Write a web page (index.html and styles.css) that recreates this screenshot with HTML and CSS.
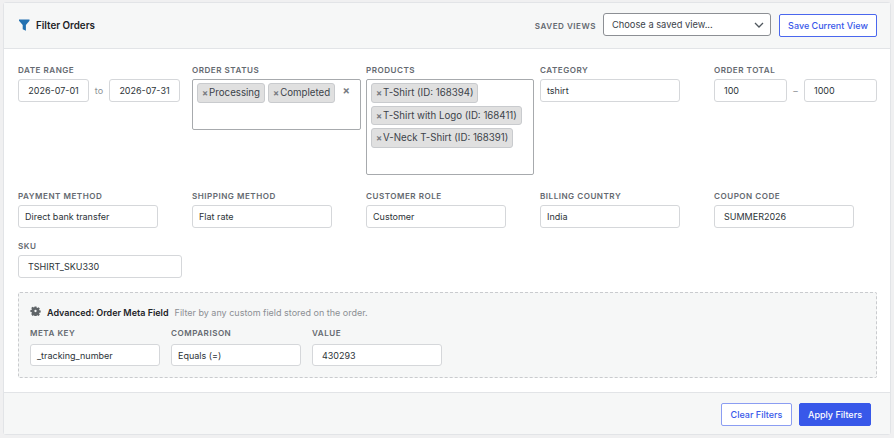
FILE: index.html
```html
<!DOCTYPE html>
<html lang="en">
<head>
  <meta charset="UTF-8">
  <title>Filter Orders</title>
  <link rel="stylesheet" href="styles.css">
</head>
<body>

  <div class="panel">

    <div class="panel-head">
      <div class="panel-title">
        <svg class="filter-icon" width="11" height="12" viewBox="0 0 11 12"><path d="M0 0.5h10.500v1.200L6.900 6v5.800L3.700 10.200V6L0 1.700z" fill="#2271b1"/></svg>
        <strong>Filter Orders</strong>
      </div>
      <div class="saved-views">
        <span class="saved-label">SAVED VIEWS</span>
        <div class="saved-select">
          <span>Choose a saved view...</span>
          <svg width="10" height="6" viewBox="0 0 10 6"><path d="M1 1l4 4 4-4" fill="none" stroke="#50575e" stroke-width="1.300"/></svg>
        </div>
        <button class="btn btn-outline btn-save">Save Current View</button>
      </div>
    </div>

    <div class="panel-body">

      <div class="filter-grid row-one">
        <div class="field">
          <label>DATE RANGE</label>
          <div class="pair">
            <div class="input w-date center">2026-07-01</div>
            <span class="sep sep-to">to</span>
            <div class="input w-date center">2026-07-31</div>
          </div>
        </div>
        <div class="field">
          <label>ORDER STATUS</label>
          <div class="multi status-box">
            <span class="tag"><i>×</i>Processing</span>
            <span class="tag"><i>×</i>Completed</span>
            <span class="clear-x">×</span>
          </div>
        </div>
        <div class="field">
          <label>PRODUCTS</label>
          <div class="multi products-box">
            <span class="tag"><i>×</i>T-Shirt (ID: 168394)</span>
            <span class="tag"><i>×</i>T-Shirt with Logo (ID: 168411)</span>
            <span class="tag"><i>×</i>V-Neck T-Shirt (ID: 168391)</span>
          </div>
        </div>
        <div class="field">
          <label>CATEGORY</label>
          <div class="input">tshirt</div>
        </div>
        <div class="field">
          <label>ORDER TOTAL</label>
          <div class="pair">
            <div class="input w-total">100</div>
            <span class="sep sep-dash">–</span>
            <div class="input w-total">1000</div>
          </div>
        </div>
      </div>

      <div class="filter-grid row-two">
        <div class="field">
          <label>PAYMENT METHOD</label>
          <div class="input">Direct bank transfer</div>
        </div>
        <div class="field">
          <label>SHIPPING METHOD</label>
          <div class="input">Flat rate</div>
        </div>
        <div class="field">
          <label>CUSTOMER ROLE</label>
          <div class="input">Customer</div>
        </div>
        <div class="field">
          <label>BILLING COUNTRY</label>
          <div class="input">India</div>
        </div>
        <div class="field">
          <label>COUPON CODE</label>
          <div class="input indent">SUMMER2026</div>
        </div>
      </div>

      <div class="field sku-field">
        <label>SKU</label>
        <div class="input w-sku indent">TSHIRT_SKU330</div>
      </div>

      <div class="advanced">
        <div class="advanced-head">
          <svg class="gear" width="11" height="10" viewBox="-2 -1 28 26"><path d="M9.500 0h5l.7 3.500 1.600.7 3-2 3.500 3.500-2 3 .7 1.600 3.500.7v5l-3.500.7-.7 1.600 2 3-3.500 3.500-3-2-1.600.7-.7 3.500h-5l-.7-3.500-1.600-.7-3 2L.900 19.800l2-3-.7-1.600L-1.300 14.500v-5l3.500-.7.7-1.600-2-3L4.400 .7l3 2 1.600-.7zM12 9a3 3 0 1 0 0 6 3 3 0 0 0 0-6z" fill="#5f6468" fill-rule="evenodd"/></svg>
          <strong>Advanced: Order Meta Field</strong>
          <span>Filter by any custom field stored on the order.</span>
        </div>
        <div class="meta-row">
          <div class="field">
            <label>META KEY</label>
            <div class="input meta-input">_tracking_number</div>
          </div>
          <div class="field">
            <label>COMPARISON</label>
            <div class="input meta-input">Equals (=)</div>
          </div>
          <div class="field">
            <label>VALUE</label>
            <div class="input meta-input indent">430293</div>
          </div>
        </div>
      </div>

    </div>

    <div class="panel-foot">
      <button class="btn btn-outline btn-clear">Clear Filters</button>
      <button class="btn btn-primary">Apply Filters</button>
    </div>

  </div>

</body>
</html>
```

FILE: styles.css
```css
* {
  box-sizing: border-box;
}

body {
  margin: 0;
  padding: 2px 3px 3px;
  height: 438px;
  overflow: hidden;
  background-color: #f0f0f1;
  font-family: Inter, "Liberation Sans", sans-serif;
  font-size: 10px;
  color: #2c3338;
}

.panel {
  height: 433px;
  display: flex;
  flex-direction: column;
  background-color: #fff;
  border: 1px solid #e2e4e7;
  border-radius: 3px;
}

.panel-head {
  height: 46px;
  flex: none;
  display: flex;
  align-items: center;
  justify-content: space-between;
  padding: 0 13px 0 15px;
  background-color: #f6f7f7;
  border-bottom: 1px solid #e2e4e7;
}

.panel-title {
  display: flex;
  align-items: center;
  gap: 6px;
  margin-top: -1px;
  font-size: 9.800px;
  color: #1d2327;
}

.panel-title strong {
  font-weight: 600;
}

.saved-views {
  display: flex;
  align-items: center;
}

.saved-label {
  margin-right: 7px;
  font-size: 8.100px;
  font-weight: 600;
  letter-spacing: 0.5px;
  color: #646970;
}

.saved-select {
  width: 168px;
  height: 23px;
  margin: -2px 8px 0 0;
  display: flex;
  align-items: center;
  justify-content: space-between;
  padding: 0 6px 0 8px;
  background-color: #fff;
  border: 1px solid #8c8f94;
  border-radius: 3px;
  font-size: 9.300px;
  color: #3c434a;
}

.btn {
  height: 23px;
  border-radius: 2px;
  font-family: inherit;
  font-size: 9px;
  font-weight: 500;
  cursor: pointer;
  padding: 0;
}

.btn-outline {
  background-color: #fff;
  border: 1px solid #4a67ee;
  color: #3858e9;
}

.btn-save {
  width: 98px;
}

.btn-clear {
  width: 71px;
  border-color: #8b9df2;
}

.btn-primary {
  width: 72px;
  background-color: #3858e9;
  border: 1px solid #3858e9;
  color: #fff;
}

.panel-body {
  flex: 1;
  padding: 16px 14px 0;
}

.filter-grid {
  display: grid;
  grid-template-columns: repeat(5, 174px);
}

.row-one {
  height: 126px;
}

.row-two {
  height: 50px;
}

label {
  display: block;
  margin-bottom: 3px;
  line-height: 11px;
  font-size: 8.100px;
  font-weight: 600;
  letter-spacing: 0.5px;
  color: #646970;
}

.input {
  width: 140px;
  height: 23px;
  display: flex;
  align-items: center;
  padding: 0 6px;
  background-color: #fff;
  border: 1px solid #d5d7da;
  border-radius: 3px;
  font-size: 9px;
  color: #2c3338;
}

.indent {
  padding-left: 9px;
}

.center {
  justify-content: center;
  padding: 0;
}

.pair {
  display: flex;
  align-items: center;
}

.w-date {
  width: 71px;
}

.w-total {
  width: 73px;
  padding-left: 9px;
}

.w-sku {
  width: 164px;
}

.sep {
  text-align: center;
  color: #8c8f94;
  font-size: 9px;
}

.sep-to {
  width: 20px;
}

.sep-dash {
  width: 17px;
}

.multi {
  position: relative;
  width: 168px;
  display: flex;
  flex-wrap: wrap;
  align-content: flex-start;
  gap: 3px;
  padding: 3px 4px;
  background-color: #fff;
  border: 1px solid #a7aaad;
  border-radius: 2px;
}

.status-box {
  width: 169px;
  height: 51px;
}

.products-box {
  height: 96px;
  flex-direction: column;
  align-items: flex-start;
  flex-wrap: nowrap;
}

.tag {
  height: 19.500px;
  display: inline-flex;
  align-items: center;
  padding: 0 4px;
  background-color: #e0e0e0;
  border: 1px solid #c9cbce;
  border-radius: 3px;
  font-size: 9.700px;
  white-space: nowrap;
  color: #3c434a;
}

.tag i {
  margin-right: 1px;
  font-style: normal;
  font-weight: 700;
  font-size: 9px;
  color: #787c82;
}

.clear-x {
  position: absolute;
  top: 3px;
  right: 10px;
  font-size: 11px;
  font-weight: 700;
  color: #787c82;
}

.sku-field {
  margin-bottom: 14px;
}

.advanced {
  width: 859px;
  height: 86px;
  padding: 14px 11px;
  background-color: #f6f7f7;
  border: 1px dashed #c9cbce;
  border-radius: 2px;
}

.advanced-head {
  display: flex;
  align-items: center;
  margin-bottom: 10px;
  font-size: 9px;
  color: #8c8f94;
}

.advanced-head strong {
  margin-right: 6px;
  font-weight: 600;
  color: #1d2327;
}

.gear {
  margin: -3px 6px 0 0;
}

.meta-row {
  display: flex;
  gap: 11px;
}

.meta-row label {
  margin-bottom: 5px;
}

.meta-input {
  width: 130px;
  height: 22px;
}

.panel-foot {
  height: 42px;
  flex: none;
  display: flex;
  justify-content: flex-end;
  gap: 7px;
  padding: 10px 19px 0 0;
  background-color: #f6f7f7;
  border-top: 1px solid #e2e4e7;
}
```
